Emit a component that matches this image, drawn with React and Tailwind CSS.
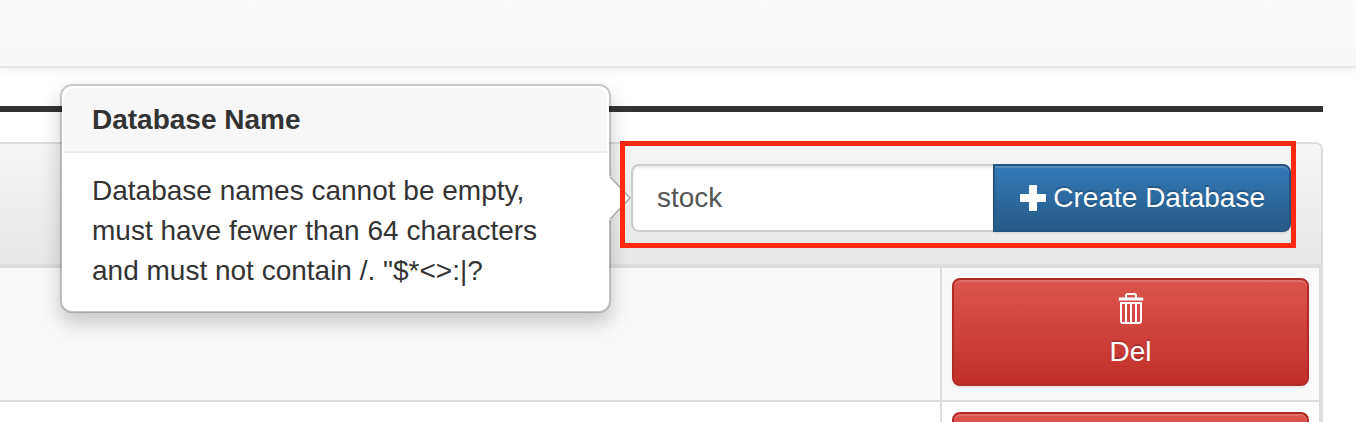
import React, { useState } from "react";

function PlusIcon() {
  return (
    <svg aria-hidden="true" width="28" height="28" viewBox="0 0 28 28" className="shrink-0">
      <path
        d="M11 1h6a1 1 0 0 1 1 1v8h8a1 1 0 0 1 1 1v6a1 1 0 0 1-1 1h-8v8a1 1 0 0 1-1 1h-6a1 1 0 0 1-1-1v-8H2a1 1 0 0 1-1-1v-6a1 1 0 0 1 1-1h8V2a1 1 0 0 1 1-1z"
        fill="#fff"
      />
    </svg>
  );
}

function TrashIcon() {
  return (
    <svg aria-hidden="true" width="26" height="32" viewBox="0 0 26 32" fill="none">
      <path d="M8 6V3.800A1.800 1.800 0 0 1 9.800 2h6.400A1.800 1.800 0 0 1 18 3.800V6" stroke="#fff" strokeWidth="2" />
      <path d="M1.600 5.500h22.800a.9.9 0 0 1 .9.9V8.500H.7V6.400a.9.9 0 0 1 .9-.9z" fill="#fff" />
      <path d="M3 11h20v18a2 2 0 0 1-2 2H5a2 2 0 0 1-2-2z" stroke="#fff" strokeWidth="2" />
      <path d="M8 11v19M13 11v19M18 11v19" stroke="#fff" strokeWidth="2" />
    </svg>
  );
}

function NamePopover() {
  return (
    <div
      role="tooltip"
      id="database-name-help"
      className="absolute right-full -top-20 z-10 mr-5 w-[551px] rounded-xl border-2 border-black/20 bg-white bg-clip-padding p-0.5 text-[#333] shadow-[0_10px_20px_rgba(0,0,0,0.2)]"
    >
      <h3 className="rounded-t-[10px] border-b-2 border-[#ebebeb] bg-[#f7f7f7] px-7 py-4 text-[28px] leading-[31px] font-bold">
        Database Name
      </h3>
      <p className="px-7 py-[18px] text-[28px] leading-10">
        Database names cannot be empty,
        <br />
        must have fewer than 64 characters
        <br />
        and must not contain /. "$*&lt;&gt;:|?
      </p>
      <svg
        aria-hidden="true"
        width="24"
        height="44"
        viewBox="0 0 24 44"
        className="absolute top-[90px] -right-[24px]"
      >
        <path d="M0 0h2v1.500L21.500 22 2 42.500V44H0z" fill="#fff" />
        <path d="M1 .8 21 22 1 43.200" fill="none" stroke="#a8a8a8" strokeWidth="1.500" />
      </svg>
    </div>
  );
}

function DatabaseRow({ striped }) {
  return (
    <tr className={striped ? "bg-[#f9f9f9]" : "bg-white"}>
      <td className="border-b-2 border-[#ddd]" />
      <td className="w-[379px] border-b-2 border-l-2 border-[#ddd] px-2.5 pt-2.5 pb-3.5">
        <button
          type="button"
          className="flex w-full flex-col items-center rounded-lg border-2 border-[#b02a28] bg-linear-to-b from-[#dc544f] to-[#c12e2a] py-3 text-[28px] leading-10 text-white shadow-[inset_0_2px_0_rgba(255,255,255,0.15),0_2px_2px_rgba(0,0,0,0.075)] [text-shadow:0_-2px_0_rgba(0,0,0,0.2)]"
        >
          <span className="flex h-10 items-start">
            <TrashIcon />
          </span>
          Del
        </button>
      </td>
    </tr>
  );
}

export default function App() {
  const [name, setName] = useState("stock");

  return (
    <div className="h-screen overflow-hidden bg-white font-['Liberation_Sans',Arial,sans-serif]">
      <header className="h-17 border-b-2 border-[#e7e7e7] bg-linear-to-b from-[#fbfbfb] to-[#f8f8f8] shadow-[0_2px_10px_rgba(0,0,0,0.075)]" />
      <main className="pt-[38px] pr-[33px]">
        <hr className="h-1.5 border-0 bg-[#333]" />
        <section className="mt-[30px] rounded-tr-lg border-t-2 border-r-2 border-[#ddd]">
          <div className="flex justify-end rounded-tr-md border-b-2 border-[#ddd] bg-linear-to-b from-[#f5f5f5] to-[#e8e8e8] pt-5 pr-[30px] pb-8">
            <form className="relative flex h-17 w-[660px]" onSubmit={(e) => e.preventDefault()}>
              <input
                type="text"
                aria-label="Database Name"
                aria-describedby="database-name-help"
                value={name}
                onChange={(e) => setName(e.target.value)}
                className="min-w-0 flex-1 rounded-l-lg border-2 border-r-0 border-[#ccc] bg-white px-6 text-[28px] text-[#555] shadow-[inset_0_2px_2px_rgba(0,0,0,0.075)] outline-none"
              />
              <button
                type="submit"
                className="flex items-center gap-1.5 rounded-r-lg border-2 border-[#245580] bg-linear-to-b from-[#337ab7] to-[#265a88] px-6 text-[28px] leading-10 whitespace-nowrap text-white shadow-[inset_0_2px_0_rgba(255,255,255,0.15),0_2px_2px_rgba(0,0,0,0.075)] [text-shadow:0_-2px_0_rgba(0,0,0,0.2)]"
              >
                <PlusIcon />
                Create Database
              </button>
              <NamePopover />
              <div className="pointer-events-none absolute -top-[23px] -right-[5px] -bottom-4 -left-[11px] z-20 border-5 border-[#fb2812]" />
            </form>
          </div>
          <table className="w-full border-separate border-spacing-0 border-t-2 border-r-2 border-[#ddd]">
            <tbody>
              <DatabaseRow striped />
              <DatabaseRow />
            </tbody>
          </table>
        </section>
      </main>
    </div>
  );
}
